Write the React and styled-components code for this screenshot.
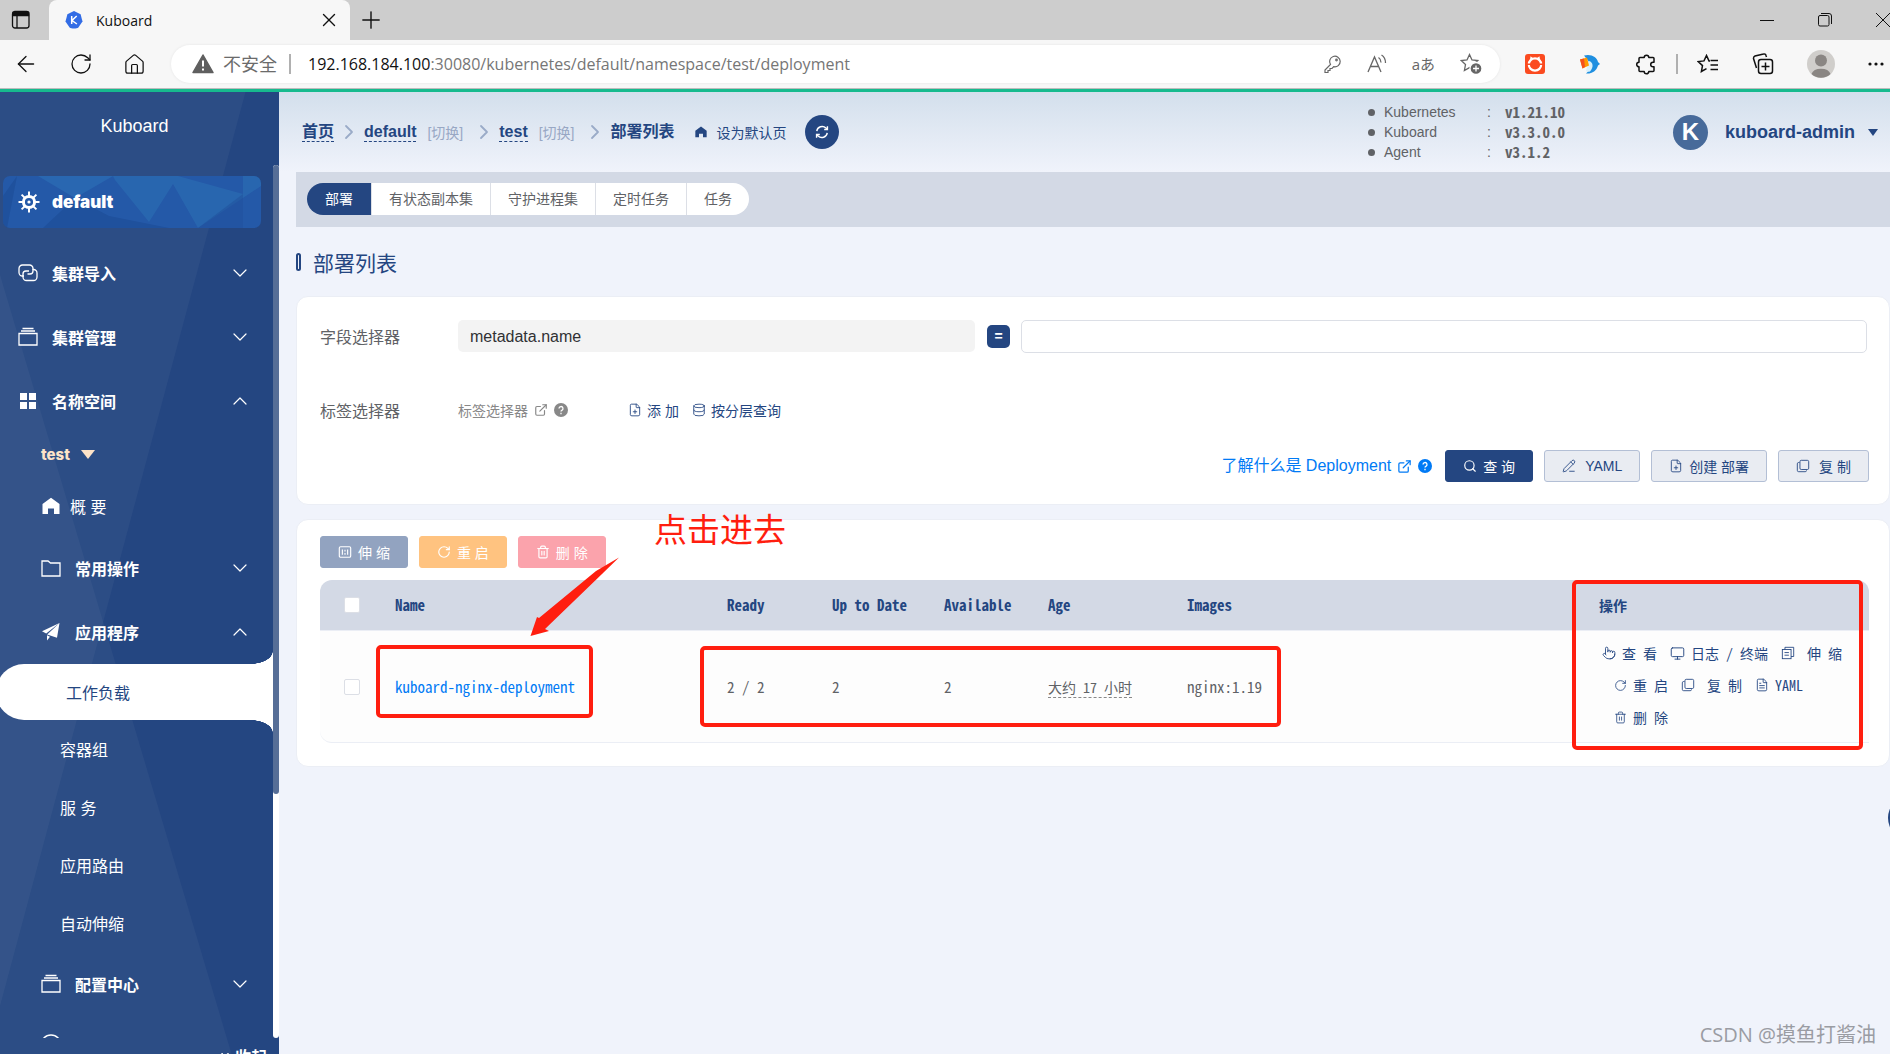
import React from 'react';
import styled, { createGlobalStyle, css } from 'styled-components';
import {
    ArrowLeft,
    ChevronDown,
    ChevronRight,
    ChevronsLeft,
    ChevronUp,
    Database,
    ExternalLink,
    FilePlus,
    FileText,
    House,
    Monitor,
    PencilLine,
    Plus,
    Pointer,
    RotateCw,
    Search,
    Trash2,
    X,
} from 'lucide-react';

const NAVY = '#244681';
const RED = '#ff1e0f';
const SANS = '"Liberation Sans", "Noto Sans CJK SC", sans-serif';
const MONO = '"Noto Sans Mono CJK SC", "Liberation Mono", "Noto Sans CJK SC", monospace';
const BROWSER = '"Open Sans", "Noto Sans CJK SC", sans-serif';

/* ---------- icons ---------- */

const CopyIcon = ({ size = 14 }) => (
    <svg width={size} height={size} viewBox="0 0 16 16" fill="none" stroke="currentColor" strokeWidth="1">
        <rect x="4.5" y="1.5" width="10" height="10.5" rx="1.5" />
        <path d="M4 4H3a1.5 1.5 0 0 0-1.5 1.5V13A1.5 1.5 0 0 0 3 14.5h7.5A1.5 1.5 0 0 0 12 13" />
    </svg>
);

const DocsIcon = () => (
    <svg width="14" height="14" viewBox="0 0 16 16" fill="none" stroke="currentColor" strokeWidth="1">
        <rect x="1.5" y="4" width="10" height="10.5" />
        <path d="M4.5 4V1.5h10V12h-3M4 7.5h5M4 10.5h5" />
    </svg>
);

const ScaleIcon = () => (
    <svg width="14" height="14" viewBox="0 0 16 16" fill="none" stroke="currentColor" strokeWidth="1.3">
        <rect x="1.5" y="2" width="13" height="12" rx="1.5" />
        <path d="M5 5v6M11 5v6M8 5.5v2M8 9v2" />
    </svg>
);

const HelmIcon = () => (
    <svg width="22" height="22" viewBox="0 0 22 22" fill="none" stroke="currentColor">
        <circle cx="11" cy="11" r="5.6" strokeWidth="3" />
        <circle cx="11" cy="11" r="1.6" fill="currentColor" stroke="none" />
        <path d="M11 .5V5M11 17v4.5M.5 11H5M17 11h4.5M3.6 3.6l3 3M15.4 15.4l3 3M18.4 3.6l-3 3M6.6 15.4l-3 3" strokeWidth="2" />
    </svg>
);

const ChainIcon = () => (
    <svg width="20" height="20" viewBox="0 0 20 20" fill="none" stroke="currentColor" strokeWidth="1.3">
        <path d="M6 13H4.500A3.500 3.500 0 0 1 1 9.500V5.500A3.500 3.500 0 0 1 4.500 2h7A3.500 3.500 0 0 1 15 5.500V8a3 3 0 0 1-3 3H9.500" />
        <path d="M14.500 6.500h1A3.500 3.500 0 0 1 19 10v4a3.500 3.500 0 0 1-3.500 3.500h-7A3.500 3.500 0 0 1 5 14v-3a3 3 0 0 1 3-3h3" />
    </svg>
);

const StackIcon = () => (
    <svg width="20" height="20" viewBox="0 0 20 20" fill="none" stroke="currentColor" strokeWidth="1.300">
        <path d="M1 6.500h18V18H1zM3 4h14M4.500 1.500h11" />
    </svg>
);

const GridIcon = () => (
    <svg width="20" height="20" viewBox="0 0 20 20" fill="currentColor">
        <path d="M2 2h7v7H2zM11 2h7v7h-7zM2 11h7v7H2zM11 11h7v7h-7z" />
    </svg>
);

const FolderIcon = () => (
    <svg width="20" height="20" viewBox="0 0 20 20" fill="none" stroke="currentColor" strokeWidth="1.300">
        <path d="M1 3h6l2.500 2H19v13H1z" />
    </svg>
);

const PlaneIcon = () => (
    <svg width="20" height="20" viewBox="0 0 20 20" fill="currentColor">
        <path d="M18.500 1 1 9.200l4.200 2.400zM18.500 1 6.200 12.500l9.800 3.300zM6 13.300V18.500l3-3.800z" />
    </svg>
);

const HomeSolid = ({ size = 18 }) => (
    <svg width={size} height={size} viewBox="0 0 18 18" fill="currentColor">
        <path d="M9 .8 17.500 7v10h-5.500v-5.500H6V17H.5V7z" />
    </svg>
);

const RefreshIcon = () => (
    <svg width="14" height="14" viewBox="0 0 16 16" fill="none" stroke="currentColor" strokeWidth="1.6">
        <path d="M2 7A6.200 6.200 0 0 1 12.500 3.500L14 5M14 9a6.200 6.200 0 0 1-10.500 3.500L2 11" />
        <path d="M14.200 1.500V5.200h-3.700M1.800 14.500v-3.700h3.700" />
    </svg>
);

const HelpIcon = () => (
    <svg width="14" height="14" viewBox="0 0 14 14">
        <circle cx="7" cy="7" r="7" fill="currentColor" />
        <path d="M5 5.500a2 2 0 1 1 2.900 1.800c-.6.300-.9.600-.9 1.200M7 9.800v1.400" fill="none" stroke="#fff" strokeWidth="1.300" />
    </svg>
);

const PanelIcon = () => (
    <svg width="20" height="20" viewBox="0 0 20 20" fill="none" stroke="#111" strokeWidth="1.300">
        <rect x="1.500" y="1.500" width="16.500" height="16.500" rx="2.500" />
        <path d="M2 2.500h15.500v3H2zM6 6v12" fill="#111" />
    </svg>
);

const Favicon = () => (
    <svg width="18" height="18" viewBox="0 0 18 18">
        <path d="M9 0l6.600 3.200 1.900 7.300-4.300 6.200c-1 .9-7.400.9-8.400 0L.5 10.500l1.900-7.300z" fill="#326ce5" />
        <path d="M6.700 5v8M11.700 5 7 9.500l4.900 3.500" fill="none" stroke="#fff" strokeWidth="1.500" />
    </svg>
);

const WarningIcon = () => (
    <svg width="22" height="20" viewBox="0 0 22 20">
        <path d="M11 1 21 18.500H1z" fill="#5f5f5f" stroke="#5f5f5f" strokeWidth="1.500" strokeLinejoin="round" />
        <path d="M11 6.500v6M11 14.500v2" stroke="#fff" strokeWidth="2" />
    </svg>
);

const KeyIcon = () => (
    <svg width="18" height="20" viewBox="0 0 18 20" fill="none" stroke="currentColor" strokeWidth="1.200">
        <path d="M6.500 10.500a5.300 5.300 0 1 1 3.200 2.200L8 14.500H6v2H4v2H1V16z" />
        <circle cx="12.500" cy="6" r=".8" />
    </svg>
);

const ReadAloudIcon = () => (
    <svg width="20" height="20" viewBox="0 0 20 20" fill="none" stroke="currentColor" strokeWidth="1.300">
        <path d="M1 18 7.500 3 14 18M3.500 12.500h8M11.500 3.500c1.500 1 2.500 2.800 2.500 5M14.500 1c2.500 1.500 4 4.500 4 8" />
    </svg>
);

const STAR = 'M9.500 1.500l2.500 5.400 5.800.7-4.300 4 1.100 5.900-5.100-2.900-5.100 2.900 1.100-5.900-4.300-4 5.800-.7z';

const StarAddIcon = () => (
    <svg width="22" height="22" viewBox="0 0 22 22" fill="none" stroke="currentColor" strokeWidth="1.300">
        <path d={STAR} />
        <circle cx="16" cy="15.500" r="6" fill="#666" stroke="#fff" />
        <path d="M16 12.500v6M13 15.500h6" stroke="#fff" />
    </svg>
);

const StarListIcon = () => (
    <svg width="22" height="20" viewBox="0 0 22 20" fill="none" stroke="currentColor" strokeWidth="1.500">
        <path d="M13 6.900h-1L9.500 1.500 7 6.900l-5.800.7 4.300 4-1.100 5.900L9.500 14.600M13.500 6.500H21M13.500 11H21M13.500 15.500H21" />
    </svg>
);

const PuzzleIcon = () => (
    <svg width="22" height="22" viewBox="0 0 22 22" fill="none" stroke="currentColor" strokeWidth="1.500" strokeLinejoin="round">
        <path d="M5 4.500h4.200a2.300 2.300 0 1 1 4.600 0H18a1 1 0 0 1 1 1v3.700h-1a2.300 2.300 0 0 0 0 4.600h1v3.700a1 1 0 0 1-1 1h-4.200a2.300 2.300 0 1 1-4.600 0H5a1 1 0 0 1-1-1v-3.700a2.300 2.300 0 1 1 0-4.600V5.500a1 1 0 0 1 1-1z" />
    </svg>
);

const CollectionsIcon = () => (
    <svg width="22" height="22" viewBox="0 0 22 22" fill="none" stroke="currentColor" strokeWidth="1.500">
        <rect x="6.500" y="6.500" width="14" height="14" rx="2.500" />
        <path d="M13.500 9.500v8M9.500 13.500h8M4.500 15 1.500 5.500A2.500 2.500 0 0 1 3 3l8.500-2A2 2 0 0 1 14 2.500l.5 1.500" />
    </svg>
);

const RedExtension = () => (
    <svg width="20" height="20" viewBox="0 0 20 20" fill="none">
        <rect width="20" height="20" rx="3" fill="#fb4b20" />
        <circle cx="10" cy="10.500" r="6.200" stroke="#fff" strokeWidth="2.200" />
        <path d="M2 10.200h3M15 10.200h3" stroke="#fb4b20" strokeWidth="1.600" />
        <path d="M5 6 5.500 2.300 8.500 4.500M15 6l-.5-3.700-3 2.200" fill="#fff" />
    </svg>
);

const DolphinExtension = () => (
    <svg width="20" height="20" viewBox="0 0 20 20">
        <path d="M4 1.500C11-.5 17 3 18 8l2 2-2 1.500C16.500 17 12 20 6 19.500c4-3 5-7 3.500-11z" fill="#1f8fe0" />
        <path d="M9 7c4 1 5 6 1 10.500-2 .8-4 .2-4-1z" fill="#d8f0fa" />
        <path d="M0 5.500 7 3.500l2 8-6.500 3z" fill="#f90" />
        <path d="M0 5.500 4 4.500l1 8.500-2.500 1.500z" fill="#f4511e" />
    </svg>
);

const UserIcon = () => (
    <svg width="28" height="28" viewBox="0 0 28 28">
        <circle cx="14" cy="14" r="14" fill="#d0cecb" />
        <circle cx="14" cy="10.500" r="6" fill="#8a8683" />
        <path d="M4.500 24a9.800 7 0 0 1 19 0A14 14 0 0 1 4.500 24z" fill="#8a8683" />
    </svg>
);

const RestoreIcon = () => (
    <svg width="14" height="14" viewBox="0 0 14 14" fill="none" stroke="#111">
        <rect x=".5" y="2.500" width="10.500" height="10.500" rx="1.500" />
        <path d="M3 .5h8A2.500 2.500 0 0 1 13.500 3v8" />
    </svg>
);

/* ---------- browser ---------- */

const BrowserChrome = () => (
    <Chrome>
        <TabStrip>
            <PanelIcon />
            <BrowserTab>
                <Favicon />
                <TabTitle>Kuboard</TabTitle>
                <BareButton aria-label="关闭标签页">
                    <X size={22} strokeWidth={1.5} />
                </BareButton>
            </BrowserTab>
            <BareButton aria-label="新建标签页">
                <Plus size={28} strokeWidth={1.2} />
            </BareButton>
            <WindowButtons>
                <BareButton aria-label="最小化">
                    <svg width="14" height="14" stroke="#111">
                        <path d="M0 7.500h14" />
                    </svg>
                </BareButton>
                <BareButton aria-label="还原">
                    <RestoreIcon />
                </BareButton>
                <BareButton aria-label="关闭">
                    <svg width="14" height="14" stroke="#111">
                        <path d="M0 0l14 14M14 0 0 14" />
                    </svg>
                </BareButton>
            </WindowButtons>
        </TabStrip>
        <Toolbar>
            <NavButtons>
                <BareButton aria-label="后退">
                    <ArrowLeft size={26} strokeWidth={1.2} />
                </BareButton>
                <BareButton aria-label="刷新">
                    <RotateCw size={24} strokeWidth={1.3} />
                </BareButton>
                <BareButton aria-label="主页">
                    <House size={23} strokeWidth={1.3} />
                </BareButton>
            </NavButtons>
            <AddressBar>
                <WarningIcon />
                <Insecure>不安全</Insecure>
                <Divider />
                <Url>
                    <b>192.168.184.100</b>:30080/kubernetes/default/namespace/test/deployment
                </Url>
                <AddressTools>
                    <BareButton aria-label="密码">
                        <KeyIcon />
                    </BareButton>
                    <BareButton aria-label="大声朗读">
                        <ReadAloudIcon />
                    </BareButton>
                    <TranslateButton aria-label="翻译">aあ</TranslateButton>
                    <BareButton aria-label="收藏">
                        <StarAddIcon />
                    </BareButton>
                </AddressTools>
            </AddressBar>
            <Extensions>
                <BareButton aria-label="扩展一">
                    <RedExtension />
                </BareButton>
                <BareButton aria-label="扩展二">
                    <DolphinExtension />
                </BareButton>
                <BareButton aria-label="扩展">
                    <PuzzleIcon />
                </BareButton>
            </Extensions>
            <Divider />
            <BrowserMenu>
                <BareButton aria-label="收藏夹">
                    <StarListIcon />
                </BareButton>
                <BareButton aria-label="集锦">
                    <CollectionsIcon />
                </BareButton>
                <BareButton aria-label="个人">
                    <UserIcon />
                </BareButton>
                <BareButton aria-label="更多">
                    <svg width="16" height="4" fill="#111">
                        <circle cx="2" cy="2" r="1.600" />
                        <circle cx="8" cy="2" r="1.600" />
                        <circle cx="14" cy="2" r="1.600" />
                    </svg>
                </BareButton>
            </BrowserMenu>
        </Toolbar>
    </Chrome>
);

/* ---------- sidebar ---------- */

const MenuGroup = ({ icon, label, open, nested }) => (
    <GroupRow $nested={nested}>
        <IconSlot>{icon}</IconSlot>
        <GroupLabel>{label}</GroupLabel>
        {open ? <ChevronUp size={24} strokeWidth={1.2} /> : <ChevronDown size={24} strokeWidth={1.2} />}
    </GroupRow>
);

const SUB_ITEMS = ['容器组', '服 务', '应用路由', '自动伸缩'];

const Sidebar = () => (
    <SideWrapper>
        <Brand>Kuboard</Brand>
        <ScrollArea>
            <Menu>
                <ClusterLink href="#default">
                    <ClusterFacets viewBox="0 0 258 52" preserveAspectRatio="none">
                        <path d="M35 0h75l-38 22z" fill="#2d72b8" opacity=".6" />
                        <path d="M110 0h65l65 18V0h18v10L195 52 170 8 146 46 112 4z" fill="#2f75b9" opacity=".45" />
                        <path d="M0 20 14 0 4 52H0zM40 52 72 22l34 18 60 12z" fill="#1c4b93" opacity=".55" />
                        <path d="M195 52 240 18v34z" fill="#1f509b" opacity=".5" />
                    </ClusterFacets>
                    <HelmIcon />
                    default
                </ClusterLink>
                <MenuGroup icon={<ChainIcon />} label="集群导入" />
                <MenuGroup icon={<StackIcon />} label="集群管理" />
                <MenuGroup icon={<GridIcon />} label="名称空间" open />
                <NamespaceButton>
                    test
                    <Caret $size={7} />
                </NamespaceButton>
                <OverviewLink href="#overview">
                    <HomeSolid />
                    概 要
                </OverviewLink>
                <MenuGroup nested icon={<FolderIcon />} label="常用操作" />
                <MenuGroup nested icon={<PlaneIcon />} label="应用程序" open />
                <ActiveLink href="#workload">工作负载</ActiveLink>
                {SUB_ITEMS.map((item) => (
                    <SubLink key={item} href="#sub">
                        {item}
                    </SubLink>
                ))}
                <MenuGroup nested icon={<StackIcon />} label="配置中心" />
                <MenuGroup
                    nested
                    icon={
                        <svg width="22" height="28" fill="none" stroke="currentColor" strokeWidth="1.500">
                            <circle cx="10" cy="11" r="10" />
                        </svg>
                    }
                />
            </Menu>
            <ScrollTrack>
                <ScrollThumb />
            </ScrollTrack>
        </ScrollArea>
        <Collapse>
            <CollapseButton>
                <ChevronsLeft size={20} strokeWidth={2} />
                收起
            </CollapseButton>
        </Collapse>
    </SideWrapper>
);

/* ---------- page ---------- */

const VERSIONS = [
    ['Kubernetes', 'v1.21.10'],
    ['Kuboard', 'v3.3.0.0'],
    ['Agent', 'v3.1.2'],
];

const PageHeader = () => (
    <HeaderWrapper>
        <Breadcrumb>
            <Crumb href="#home">首页</Crumb>
            <ChevronRight size={24} strokeWidth={1.8} />
            <Crumb href="#default">default</Crumb>
            <SwitchButton>[切换]</SwitchButton>
            <ChevronRight size={24} strokeWidth={1.8} />
            <Crumb href="#test">test</Crumb>
            <SwitchButton>[切换]</SwitchButton>
            <ChevronRight size={24} strokeWidth={1.8} />
            <CurrentCrumb>部署列表</CurrentCrumb>
            <DefaultPageButton>
                <HomeSolid size={12} />
                设为默认页
            </DefaultPageButton>
            <RoundButton aria-label="刷新列表">
                <RefreshIcon />
            </RoundButton>
        </Breadcrumb>
        <VersionList>
            {VERSIONS.map(([name, version]) => (
                <li key={name}>
                    <span>{name}</span>
                    <i>:</i>
                    <b>{version}</b>
                </li>
            ))}
        </VersionList>
        <UserButton>
            <Avatar>K</Avatar>
            kuboard-admin
            <Caret $size={5} />
        </UserButton>
    </HeaderWrapper>
);

const KINDS = ['部署', '有状态副本集', '守护进程集', '定时任务', '任务'];

const FilterCard = () => (
    <Card>
        <FieldRow>
            <FieldLabel htmlFor="field">字段选择器</FieldLabel>
            <FieldSelect id="field" defaultValue="metadata.name">
                <option>metadata.name</option>
            </FieldSelect>
            <EqualButton>=</EqualButton>
            <FieldInput aria-label="字段值" />
        </FieldRow>
        <FieldRow $tall>
            <FieldLabel as="span">标签选择器</FieldLabel>
            <LabelHelp href="#labels">
                标签选择器
                <ExternalLink size={14} strokeWidth={2} />
                <HelpIcon />
            </LabelHelp>
            <TextButton>
                <FilePlus size={14} strokeWidth={1.5} />
                添 加
            </TextButton>
            <TextButton>
                <Database size={14} strokeWidth={1.5} />
                按分层查询
            </TextButton>
        </FieldRow>
        <ActionBar>
            <DocLink href="#docs">
                <span>了解什么是 Deployment</span>
                <ExternalLink size={15} strokeWidth={2} />
                <HelpIcon />
            </DocLink>
            <Button $primary>
                <Search size={14} strokeWidth={2} />查 询
            </Button>
            <Button $wide>
                <PencilLine size={14} strokeWidth={1.5} />
                YAML
            </Button>
            <Button>
                <FilePlus size={14} strokeWidth={1.5} />
                创建 部署
            </Button>
            <Button $wide>
                <CopyIcon />复 制
            </Button>
        </ActionBar>
    </Card>
);

const DeploymentCard = () => (
    <Card $table>
        <BatchBar>
            <Button $tint="#92a3c0">
                <ScaleIcon />伸 缩
            </Button>
            <Button $tint="#ffc380">
                <RotateCw size={14} strokeWidth={2} />重 启
            </Button>
            <Button $tint="#fba3ac">
                <Trash2 size={14} strokeWidth={2} />删 除
            </Button>
        </BatchBar>
        <Table>
            <colgroup>
                <col style={{ width: 63 }} />
                <col style={{ width: 332 }} />
                <col style={{ width: 105 }} />
                <col style={{ width: 112 }} />
                <col style={{ width: 104 }} />
                <col style={{ width: 139 }} />
                <col />
                <col style={{ width: 282 }} />
            </colgroup>
            <thead>
                <tr>
                    <th>
                        <Checkbox aria-label="全选" />
                    </th>
                    <th>Name</th>
                    <th>Ready</th>
                    <th>Up to Date</th>
                    <th>Available</th>
                    <th>Age</th>
                    <th>Images</th>
                    <th>操作</th>
                </tr>
            </thead>
            <tbody>
                <tr>
                    <td>
                        <Checkbox aria-label="选择 kuboard-nginx-deployment" />
                    </td>
                    <td>
                        <NameLink href="#deployment">kuboard-nginx-deployment</NameLink>
                    </td>
                    <td>2 / 2</td>
                    <td>2</td>
                    <td>2</td>
                    <td>
                        <Age>大约 17 小时</Age>
                    </td>
                    <td>nginx:1.19</td>
                    <td>
                        <ActionLine>
                            <RowAction>
                                <Pointer size={14} strokeWidth={1.5} />查 看
                            </RowAction>
                            <RowAction>
                                <Monitor size={15} strokeWidth={1.5} />
                                日志 / 终端
                            </RowAction>
                            <RowAction $wide>
                                <DocsIcon />伸 缩
                            </RowAction>
                        </ActionLine>
                        <ActionLine $indent>
                            <RowAction>
                                <RotateCw size={13} strokeWidth={1.5} />重 启
                            </RowAction>
                            <RowAction $wide>
                                <CopyIcon />复 制
                            </RowAction>
                            <RowAction>
                                <FileText size={14} strokeWidth={1.5} />
                                YAML
                            </RowAction>
                        </ActionLine>
                        <ActionLine $indent>
                            <RowAction>
                                <Trash2 size={13} strokeWidth={1.5} />删 除
                            </RowAction>
                        </ActionLine>
                    </td>
                </tr>
            </tbody>
        </Table>
        <NameMark />
        <StatusMark />
        <ActionsMark />
        <MarkNote>点击进去</MarkNote>
        <MarkArrow viewBox="0 0 90 80">
            <path d="M89 0.500 66 14 9 61 7 60 0.500 79 19 74 15 72 72 17z" fill={RED} />
        </MarkArrow>
    </Card>
);

const App = () => (
    <>
        <GlobalStyle />
        <Page>
            <BrowserChrome />
            <Body>
                <Sidebar />
                <Main>
                    <PageHeader />
                    <KindBar>
                        {KINDS.map((kind, i) => (
                            <KindButton key={kind} $active={i === 0}>
                                {kind}
                            </KindButton>
                        ))}
                    </KindBar>
                    <Title>部署列表</Title>
                    <FilterCard />
                    <DeploymentCard />
                </Main>
            </Body>
            <SideHandle aria-label="打开面板" />
            <Watermark>CSDN @摸鱼打酱油</Watermark>
        </Page>
    </>
);

export default App;

const GlobalStyle = createGlobalStyle`
    *, *::before, *::after {
        box-sizing: border-box;
    }

    body {
        margin: 0;
        font-family: ${SANS};
    }

    button, input, select {
        font-family: inherit;
    }

    a {
        text-decoration: none;
    }

    svg {
        flex-shrink: 0;
    }
`;

const Page = styled.div`
    position: relative;
    height: 100vh;
    overflow: hidden;

    display: flex;
    flex-direction: column;

    background-color: #f0f3fb;
`;

const BareButton = styled.button`
    padding: 0;

    display: flex;
    align-items: center;

    border: none;
    background: none;
    color: inherit;
    font-size: inherit;
`;

const Chrome = styled.header`
    flex-shrink: 0;

    border-bottom: 3px solid #17ba8e;

    font-family: ${BROWSER};
    color: #111;
`;

const TabStrip = styled.div`
    height: 40px;
    padding-left: 11px;

    display: flex;
    align-items: center;

    background-color: #cdcdcd;
`;

const BrowserTab = styled.div`
    width: 301px;
    height: 40px;
    margin: 0px 7px 0px 18px;
    padding: 0px 10px 0px 16px;

    display: flex;
    align-items: center;

    border-radius: 8px 8px 0px 0px;
    background-color: #f7f7f7;
`;

const TabTitle = styled.span`
    flex: 1;
    margin-left: 13px;

    font-size: 14px;
`;

const WindowButtons = styled.div`
    margin-left: auto;

    display: flex;
    gap: 44px;
`;

const Toolbar = styled.div`
    height: 49px;
    padding: 0px 6px 0px 13px;

    display: flex;
    align-items: center;

    border-bottom: 1px solid #bdbdbd;
    background-color: #f7f7f7;
`;

const NavButtons = styled.div`
    width: 158px;

    display: flex;
    gap: 30px;
`;

const AddressBar = styled.div`
    flex: 1;
    height: 38px;
    padding: 0px 18px 0px 21px;

    display: flex;
    align-items: center;

    border-radius: 19px;
    background-color: #ffffff;
    box-shadow: 0 0 3px rgba(0, 0, 0, 0.08);
`;

const Insecure = styled.span`
    margin: 0px 12px 0px 9px;

    font-size: 18px;
    line-height: 20px;
    color: #6b6b6b;
`;

const Divider = styled.span`
    width: 2px;
    height: 20px;

    background-color: #b0b0b0;
`;

const Url = styled.span`
    flex: 1;
    margin-left: 17px;

    font-size: 16px;
    color: #767676;

    b {
        font-weight: normal;
        color: #111;
    }
`;

const AddressTools = styled.div`
    display: flex;
    align-items: center;
    gap: 25px;

    color: #666;
`;

const TranslateButton = styled(BareButton)`
    font-size: 15px;
    line-height: 18px;
`;

const Extensions = styled.div`
    margin: 0px 19px 0px 25px;

    display: flex;
    align-items: center;
    gap: 35px;
`;

const BrowserMenu = styled.div`
    margin-left: 19px;

    display: flex;
    align-items: center;
    gap: 33px;
`;

const Body = styled.div`
    flex: 1;
    min-height: 0;

    display: flex;
`;

const SideWrapper = styled.aside`
    position: relative;
    z-index: 0;
    width: 279px;
    flex-shrink: 0;

    display: flex;
    flex-direction: column;

    background-color: ${NAVY};
    color: #ffffff;

    &::before,
    &::after {
        content: '';
        position: absolute;
        z-index: -1;
        inset: 0;
        background-color: rgba(255, 255, 255, 0.04);
    }

    &::before {
        clip-path: polygon(0 0, 88% 0, 0 95%);
    }

    &::after {
        clip-path: polygon(0 19%, 83% 100%, 0 100%);
    }
`;

const Brand = styled.div`
    height: 68px;
    padding-right: 10px;

    display: flex;
    justify-content: center;
    align-items: center;

    font-size: 18px;
`;

const ScrollArea = styled.div`
    flex: 1;
    min-height: 0;

    display: flex;
`;

const Menu = styled.nav`
    flex: 1;
    overflow: hidden;

    display: flex;
    flex-direction: column;

    & > * {
        flex-shrink: 0;
    }
`;

const ScrollTrack = styled.div`
    width: 6px;
    margin-top: 5px;

    border-radius: 3px;
    background-color: #ffffff;
`;

const ScrollThumb = styled.div`
    height: 72%;

    border-radius: 3px;
    background-color: #566e97;
`;

const ClusterLink = styled.a`
    position: relative;
    z-index: 0;
    height: 52px;
    margin: 16px 12px 13px 3px;
    padding: 0px 15px;
    overflow: hidden;

    display: flex;
    align-items: center;
    gap: 12px;

    border-radius: 7px;
    background-color: #2459a8;

    font-family: Inter, sans-serif;
    font-weight: 900;
    font-size: 17px;
    color: #ffffff;
`;

const ClusterFacets = styled.svg`
    position: absolute;
    z-index: -1;
    inset: 0;
    width: 100%;
    height: 100%;
`;

const GroupRow = styled.button`
    height: 64px;
    padding: 0px 21px 0px ${({ $nested }) => ($nested ? 41 : 18)}px;

    display: flex;
    align-items: center;

    border: none;
    background: none;
    color: #ffffff;
`;

const IconSlot = styled.span`
    width: 34px;

    display: flex;
`;

const GroupLabel = styled.span`
    flex: 1;

    text-align: left;
    font-weight: bold;
    font-size: 16px;
`;

const NamespaceButton = styled.button`
    height: 42px;
    padding: 0px 0px 0px 41px;

    display: flex;
    align-items: center;
    gap: 11px;

    border: none;
    background: none;

    font-family: Inter, sans-serif;
    font-weight: 800;
    font-size: 15px;
    color: #fde3c8;
`;

const Caret = styled.span`
    border-top: ${({ $size }) => $size + 2}px solid currentColor;
    border-left: ${({ $size }) => $size}px solid transparent;
    border-right: ${({ $size }) => $size}px solid transparent;
`;

const OverviewLink = styled.a`
    height: 61px;
    padding-left: 42px;

    display: flex;
    align-items: center;
    gap: 10px;

    font-size: 16px;
    color: #ffffff;
`;

const SubLink = styled.a`
    height: 58px;
    padding-left: 60px;

    display: flex;
    align-items: center;

    font-size: 16px;
    color: #ffffff;
`;

const ActiveLink = styled(SubLink)`
    position: relative;
    height: 56px;
    margin-left: -4px;
    padding-left: 70px;

    border-radius: 28px 0px 0px 28px;
    background-color: #ffffff;

    color: ${NAVY};

    &::before,
    &::after {
        content: '';
        position: absolute;
        right: 0;
        width: 22px;
        height: 13px;
    }

    &::before {
        bottom: 100%;
        background: radial-gradient(ellipse 22px 13px at 0 0, transparent 98%, #ffffff 100%);
    }

    &::after {
        top: 100%;
        background: radial-gradient(ellipse 22px 13px at 0 100%, transparent 98%, #ffffff 100%);
    }
`;

const Collapse = styled.div`
    height: 16px;
    padding: 10px 12px 0px 0px;
    overflow: hidden;

    display: flex;
    justify-content: flex-end;
    align-items: flex-start;
`;

const CollapseButton = styled(BareButton)`
    gap: 2px;

    font-weight: bold;
    font-size: 16px;
    line-height: 20px;
`;

const Main = styled.main`
    flex: 1;
    min-width: 0;
    padding-left: 17px;

    display: flex;
    flex-direction: column;
`;

const HeaderWrapper = styled.div`
    height: 80px;
    margin-left: -17px;
    padding: 0px 12px 0px 23px;

    display: flex;
    align-items: center;

    background: linear-gradient(#d3dfec, #f0f3fb);
`;

const Breadcrumb = styled.nav`
    flex: 1;

    display: flex;
    align-items: center;

    color: ${NAVY};

    & > svg {
        margin: 0px 3px;
        color: #9aabc8;
    }
`;

const Crumb = styled.a`
    border-bottom: 1px dashed ${NAVY};

    font-weight: bold;
    font-size: 16px;
    line-height: 19px;
    color: ${NAVY};
`;

const CurrentCrumb = styled.strong`
    font-size: 16px;
    line-height: 20px;
`;

const SwitchButton = styled(BareButton)`
    margin: 0px 6px 0px 11px;

    font-size: 14px;
    color: #98a7c4;
`;

const DefaultPageButton = styled(BareButton)`
    gap: 10px;
    margin: 0px 18px 0px 20px;

    font-size: 14px;
    color: ${NAVY};
`;

const RoundButton = styled(BareButton)`
    width: 34px;
    height: 34px;
    justify-content: center;

    border-radius: 50%;
    background-color: ${NAVY};
    color: #ffffff;
`;

const VersionList = styled.ul`
    width: 305px;
    margin: 0;
    padding: 0;

    list-style: none;

    font-size: 14px;
    color: #606266;

    li {
        display: flex;
        align-items: center;
        height: 20px;
    }

    li::before {
        content: '';
        width: 7px;
        height: 7px;
        margin-right: 9px;
        border-radius: 50%;
        background-color: #606266;
    }

    span {
        width: 103px;
    }

    i {
        width: 18px;
        font-style: normal;
    }

    b {
        font-family: ${MONO};
        font-size: 15px;
        line-height: 20px;
    }
`;

const UserButton = styled(BareButton)`
    font-weight: bold;
    font-size: 18px;
    color: ${NAVY};

    & > :last-child {
        margin-left: 13px;
    }
`;

const Avatar = styled.span`
    width: 35px;
    height: 35px;
    margin-right: 17px;

    display: flex;
    justify-content: center;
    align-items: center;

    border-radius: 50%;
    background-color: #476a9a;

    font-size: 24px;
    color: #ffffff;
`;

const KindBar = styled.div`
    height: 55px;
    padding: 0px 0px 2px 11px;

    display: flex;
    align-items: center;

    background-color: #d3d9e5;
`;

const KindButton = styled.button`
    height: 32px;
    padding: 0px 17px 2px;

    border: none;
    border-right: 1px solid #dcdfe6;
    background-color: ${({ $active }) => ($active ? NAVY : '#ffffff')};

    font-size: 14px;
    color: ${({ $active }) => ($active ? '#ffffff' : '#606266')};

    &:first-child {
        padding: 0px 18px 2px;
        border-radius: 16px 0px 0px 16px;
    }

    &:last-child {
        border-right: none;
        border-radius: 0px 16px 16px 0px;
    }
`;

const Title = styled.h1`
    height: 69px;
    margin: 0;

    display: flex;
    align-items: center;

    font-weight: normal;
    font-size: 21px;
    color: ${NAVY};

    &::before {
        content: '';
        width: 5px;
        height: 18px;
        margin-right: 12px;
        border: 2px solid ${NAVY};
        border-radius: 3px;
    }
`;

const Card = styled.section`
    position: relative;
    margin-bottom: 14px;
    padding: ${({ $table }) => ($table ? '16px 20px 23px 23px' : '23px 20px 22px 23px')};

    border: 1px solid #ebeef5;
    border-radius: 12px;
    background-color: #ffffff;
`;

const FieldRow = styled.div`
    height: 32px;
    padding-right: 2px;

    display: flex;
    align-items: center;

    ${({ $tall }) =>
        $tall &&
        css`
            height: 76px;
            margin: 20px 0px 2px;
        `}
`;

const FieldLabel = styled.label`
    width: 138px;

    font-size: 16px;
    color: #606266;
`;

const FieldSelect = styled.select`
    flex: 493 1 0;
    height: 32px;
    padding: 0px 12px;

    appearance: none;
    border: none;
    border-radius: 5px;
    background-color: #f3f3f3;

    font-size: 16px;
    color: #303133;
`;

const EqualButton = styled.button`
    width: 23px;
    height: 23px;
    margin: 0px 11px 0px 12px;
    padding: 0;

    border: none;
    border-radius: 5px;
    background-color: ${NAVY};

    font-weight: bold;
    font-size: 14px;
    line-height: 20px;
    color: #ffffff;
`;

const FieldInput = styled.input`
    flex: 840 1 0;
    height: 33px;

    border: 1px solid #dcdfe6;
    border-radius: 5px;
    background-color: #ffffff;
`;

const LabelHelp = styled.a`
    width: 170px;

    display: flex;
    align-items: center;
    gap: 6px;

    font-size: 14px;
    color: #888888;
`;

const TextButton = styled(BareButton)`
    gap: 5px;
    margin-right: 13px;

    font-size: 14px;
    color: ${NAVY};
`;

const ActionBar = styled.div`
    display: flex;
    justify-content: flex-end;
    align-items: center;
    gap: 11px;
`;

const DocLink = styled.a`
    margin-right: 2px;

    display: flex;
    align-items: center;
    gap: 6px;

    font-size: 16px;
    line-height: 20px;
    color: #007af5;
`;

const Button = styled.button`
    height: 32px;
    padding: 0px 17px 1px;

    display: flex;
    align-items: center;
    gap: ${({ $wide }) => ($wide ? 9 : 6)}px;

    border: 1px solid #b3bfd5;
    border-radius: 3px;
    background-color: #e9ecf2;

    font-size: 14px;
    color: ${NAVY};

    ${({ $primary }) =>
        $primary &&
        css`
            border-color: ${NAVY};
            background-color: ${NAVY};
            color: #ffffff;
        `}

    ${({ $tint }) =>
        $tint &&
        css`
            border-color: ${$tint};
            background-color: ${$tint};
            color: #ffffff;
        `}
`;

const BatchBar = styled.div`
    margin-bottom: 12px;

    display: flex;
    gap: 11px;
`;

const Table = styled.table`
    width: 100%;

    table-layout: fixed;
    border-spacing: 0;

    font-family: ${MONO};
    font-size: 15px;
    line-height: 20px;
    color: #606266;

    th,
    td {
        padding: 0px 12px;
        border-bottom: 1px solid #ebeef5;
        text-align: left;
    }

    th {
        height: 51px;
        background-color: #d3d9e5;
        color: ${NAVY};
    }

    td {
        height: 112px;
        background-color: #fdfdfd;
    }

    th:first-child {
        padding-left: 24px;
        border-top-left-radius: 12px;
    }

    td:first-child {
        padding-left: 24px;
        border-bottom-left-radius: 12px;
    }

    th:last-child {
        border-top-right-radius: 12px;
        font-size: 14px;
    }

    td:last-child {
        padding-bottom: 3px;
    }
`;

const Checkbox = styled.input.attrs({ type: 'checkbox' })`
    width: 16px;
    height: 16px;
    margin: 0;

    display: block;

    appearance: none;
    border: 1px solid #dcdfe6;
    border-radius: 2px;
    background-color: #ffffff;
`;

const NameLink = styled.a`
    color: #007af5;
`;

const Age = styled.span`
    border-bottom: 1px dashed #888888;

    font-size: 14px;
`;

const ActionLine = styled.div`
    height: 32px;
    padding-left: ${({ $indent }) => ($indent ? 15 : 3)}px;

    display: flex;
    align-items: center;
    gap: 13px;
`;

const RowAction = styled(BareButton)`
    gap: ${({ $wide }) => ($wide ? 12 : 6)}px;

    white-space: nowrap;
    font-family: ${MONO};
    font-size: 14px;
    line-height: 20px;
    color: ${NAVY};
`;

/* hand-drawn marks over the table */

const Mark = styled.div`
    position: absolute;

    border: 4px solid ${RED};
    border-radius: 5px;
    pointer-events: none;
`;

const NameMark = styled(Mark)`
    top: 125px;
    left: 79px;
    width: 217px;
    height: 73px;
`;

const StatusMark = styled(Mark)`
    top: 126px;
    left: 403px;
    width: 581px;
    height: 81px;
`;

const ActionsMark = styled(Mark)`
    top: 60px;
    right: 26px;
    width: 291px;
    height: 170px;
`;

const MarkNote = styled.span`
    position: absolute;
    top: -12px;
    left: 357px;

    font-size: 33px;
    line-height: 46px;
    color: ${RED};
`;

const MarkArrow = styled.svg`
    position: absolute;
    top: 37px;
    left: 233px;
    width: 90px;
    height: 80px;
`;

const SideHandle = styled.button`
    position: absolute;
    top: 796px;
    left: calc(100% - 2px);
    width: 44px;
    height: 44px;

    border: none;
    border-radius: 50%;
    background-color: ${NAVY};
`;

const Watermark = styled.span`
    position: absolute;
    right: 14px;
    bottom: 4px;

    font-family: ${BROWSER};
    font-size: 20px;
    line-height: 30px;
    color: #9a9ca3;
`;
